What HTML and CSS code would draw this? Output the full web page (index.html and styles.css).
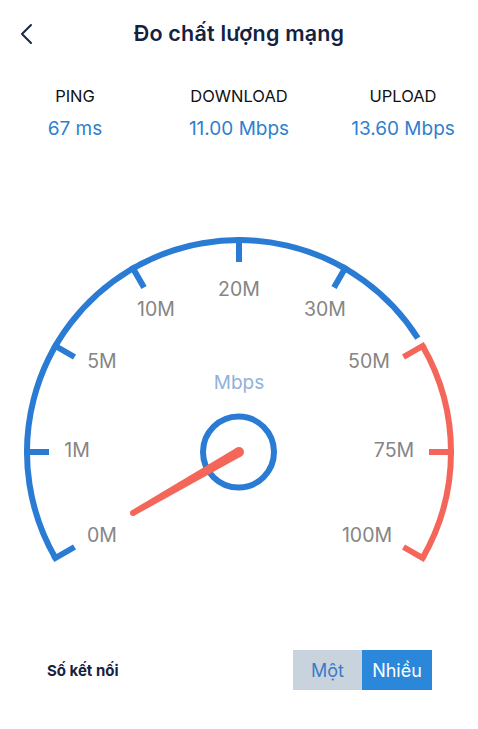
FILE: index.html
```html
<!DOCTYPE html>
<html lang="vi">
<head>
<meta charset="utf-8">
<title>Đo chất lượng mạng</title>
<link rel="stylesheet" href="styles.css">
</head>
<body>
<div class="screen">
  <header class="header">
    <svg class="back" width="14" height="22" viewBox="0 0 14 22"><path d="M11 2 L2 11 L11 20" fill="none" stroke="#1b2743" stroke-width="2" stroke-linecap="round" stroke-linejoin="round"/></svg>
    <h1 class="title">Đo chất lượng mạng</h1>
  </header>

  <section class="stats">
    <div class="stat"><div class="stat-label">PING</div><div class="stat-value">67 ms</div></div>
    <div class="stat"><div class="stat-label">DOWNLOAD</div><div class="stat-value">11.00 Mbps</div></div>
    <div class="stat"><div class="stat-label">UPLOAD</div><div class="stat-value">13.60 Mbps</div></div>
  </section>

  <div class="gauge-wrap">
    <svg class="gauge" width="478" height="380" viewBox="0 0 478 380">
      <g fill="none" stroke-width="6">
        <path d="M 55.4 359 A 212 212 0 0 1 417.8 139.1" stroke="#2a7bd3"/>
        <path d="M 422.6 147 A 212 212 0 0 1 422.6 359" stroke="#f4665a"/>
        <g stroke="#2a7bd3">
          <line x1="52.8" y1="360.5" x2="74.5" y2="348"/>
          <line x1="24" y1="253" x2="49" y2="253"/>
          <line x1="52.8" y1="145.5" x2="74.5" y2="158"/>
          <line x1="131.5" y1="66.8" x2="144" y2="88.5"/>
          <line x1="239" y1="38" x2="239" y2="63"/>
          <line x1="346.5" y1="66.8" x2="334" y2="88.5"/>
        </g>
        <g stroke="#f4665a">
          <line x1="425.2" y1="145.5" x2="403.5" y2="158"/>
          <line x1="454" y1="253" x2="429" y2="253"/>
          <line x1="425.2" y1="360.5" x2="403.5" y2="348"/>
        </g>
      </g>
      <g class="tick-label" text-anchor="middle" dominant-baseline="central">
        <text x="239" y="90">20M</text>
        <text x="156" y="110">10M</text>
        <text x="325" y="110">30M</text>
        <text x="102" y="162">5M</text>
        <text x="369" y="162">50M</text>
        <text x="77" y="251">1M</text>
        <text x="394" y="251">75M</text>
        <text x="102" y="336">0M</text>
        <text x="367" y="336">100M</text>
      </g>
      <text class="unit" x="239" y="183" text-anchor="middle" dominant-baseline="central">Mbps</text>
      <circle cx="238.5" cy="253" r="35.5" fill="none" stroke="#2a7bd3" stroke-width="6"/>
      <g fill="#f4665a">
        <polygon points="241.5,257.3 236.5,248.7 131.5,311.4 134.5,316.6"/>
        <circle cx="239" cy="253" r="5"/>
        <circle cx="133" cy="314" r="3"/>
      </g>
    </svg>
  </div>

  <section class="connections">
    <div class="conn-label">Số kết nối</div>
    <div class="segmented">
      <div class="seg seg-off">Một</div>
      <div class="seg seg-on">Nhiều</div>
    </div>
  </section>
</div>
</body>
</html>
```

FILE: styles.css
```css
* { box-sizing: border-box; }
html, body { margin: 0; padding: 0; background: #ffffff; }
body {
  font-family: Inter, "Noto Sans", "Liberation Sans", sans-serif;
  width: 478px;
  height: 729px;
  overflow: hidden;
}
.screen { display: flex; flex-direction: column; }

.header {
  position: relative;
  height: 66px;
  display: flex;
  align-items: center;
  justify-content: center;
}
.back { position: absolute; left: 20px; top: 23px; }
.title {
  margin: 0;
  font-size: 21.5px;
  font-weight: 600;
  color: #15223f;
  letter-spacing: 0.2px;
}

.stats {
  margin-top: 20px;
  display: grid;
  grid-template-columns: repeat(3, 164px);
  justify-content: center;
}
.stat { display: flex; flex-direction: column; align-items: center; }
.stat-label {
  font-size: 16.5px;
  line-height: 20px;
  color: #111111;
}
.stat-value {
  margin-top: 11px;
  font-size: 19px;
  line-height: 24px;
  color: #2f7fcf;
}

.gauge-wrap { margin-top: 58px; height: 380px; }
.gauge { display: block; }
.tick-label text {
  font-family: Inter, "Liberation Sans", sans-serif;
  font-size: 19.5px;
  fill: #858585;
}
.unit {
  font-family: Inter, "Liberation Sans", sans-serif;
  font-size: 19px;
  fill: #90b2da;
}

.connections {
  margin-top: 71px;
  height: 40px;
  display: flex;
  align-items: center;
  justify-content: space-between;
  padding: 0 46px 0 47px;
}
.conn-label {
  font-size: 15px;
  font-weight: 700;
  color: #15223f;
}
.segmented { display: flex; height: 40px; }
.seg {
  display: flex;
  align-items: center;
  justify-content: center;
  font-size: 18px;
}
.seg-off { width: 69px; background: #c9d3de; color: #3b7cc6; }
.seg-on { width: 70px; background: #2b87da; color: #ffffff; }
```
